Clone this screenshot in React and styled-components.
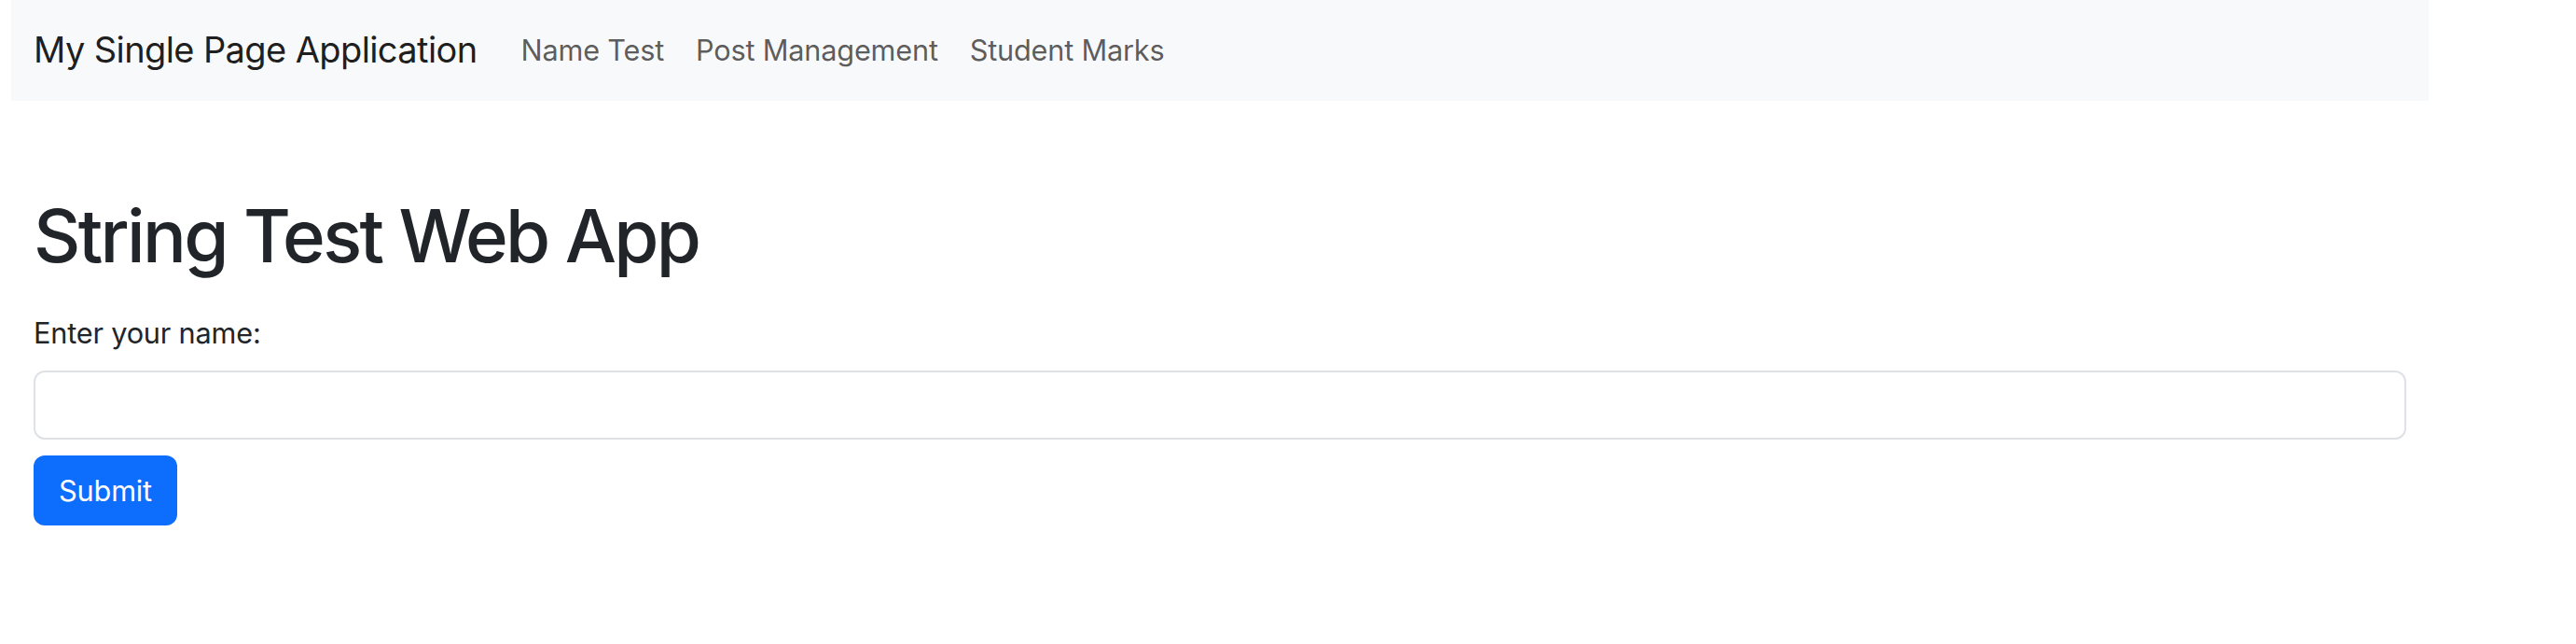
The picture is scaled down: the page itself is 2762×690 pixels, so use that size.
import React, { useState } from "react";
import styled, { createGlobalStyle } from "styled-components";

const GlobalStyle = createGlobalStyle`
  html, body {
    margin: 0;
    padding: 0;
    background: #fff;
  }
  body {
    font-family: Inter, "Noto Sans", "Liberation Sans", sans-serif;
    color: #212529;
  }
`;

const Page = styled.div`
  width: 2592px;
  margin-left: 12px;
`;

const NavBar = styled.nav`
  height: 108px;
  box-sizing: border-box;
  padding: 0 24px 2px;
  background: #f8f9fa;
  display: flex;
  align-items: center;
`;

const Brand = styled.a`
  font-size: 38px;
  color: rgba(0, 0, 0, 0.9);
  text-decoration: none;
  margin-right: 30px;
  letter-spacing: -0.6px;
`;

const NavList = styled.div`
  display: flex;
  align-items: center;
`;

const NavLink = styled.a`
  font-size: 30.7px;
  color: rgba(0, 0, 0, 0.65);
  text-decoration: none;
  padding: 0 17px;
  letter-spacing: -0.2px;
`;

const Main = styled.main`
  padding: 0 24px;
`;

const Title = styled.h1`
  font-size: 78px;
  font-weight: 500;
  line-height: 1.2;
  margin: 98px 0 34px;
  letter-spacing: -2.7px;
`;

const Label = styled.label`
  display: block;
  font-size: 30.7px;
  line-height: 1.5;
  margin-bottom: 17px;
  letter-spacing: -0.2px;
`;

const Input = styled.input`
  display: block;
  width: 100%;
  height: 74px;
  box-sizing: border-box;
  border: 2px solid #dee2e6;
  border-radius: 12px;
  padding: 0 24px;
  font-family: inherit;
  font-size: 30.7px;
  outline: none;
`;

const SubmitButton = styled.button`
  margin-top: 17px;
  height: 75px;
  width: 154px;
  border: none;
  border-radius: 12px;
  background: #0d6efd;
  color: #fff;
  font-family: inherit;
  font-size: 30.7px;
  letter-spacing: -0.2px;
  cursor: pointer;
`;

const links = ["Name Test", "Post Management", "Student Marks"];

export default function App() {
  const [name, setName] = useState("");

  return (
    <>
      <GlobalStyle />
      <Page>
        <NavBar>
          <Brand href="#">My Single Page Application</Brand>
          <NavList>
            {links.map((l) => (
              <NavLink key={l} href="#">
                {l}
              </NavLink>
            ))}
          </NavList>
        </NavBar>
        <Main>
          <Title>String Test Web App</Title>
          <form onSubmit={(e) => e.preventDefault()}>
            <Label htmlFor="name">Enter your name:</Label>
            <Input id="name" value={name} onChange={(e) => setName(e.target.value)} />
            <SubmitButton type="submit">Submit</SubmitButton>
          </form>
        </Main>
      </Page>
    </>
  );
}
